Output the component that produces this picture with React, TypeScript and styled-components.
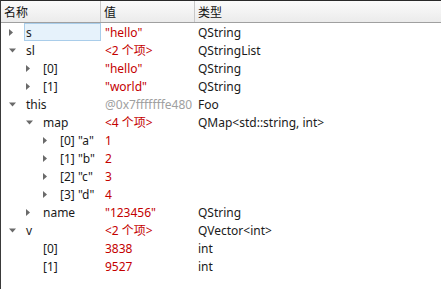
import React from "react";
import styled, { createGlobalStyle } from "styled-components";

const Global = createGlobalStyle`
  html, body { margin: 0; padding: 0; background: #fff; }
  body { font-family: "Noto Sans", "Noto Sans CJK SC", sans-serif; font-size: 12px; }
`;

type Node = {
  name: string;
  value: string;
  type?: string;
  depth: number;
  arrow?: "right" | "down" | "none";
  kind?: "red" | "gray";
  selected?: boolean;
};

const rows: Node[] = [
  { name: "s", value: "\"hello\"", type: "QString", depth: 0, arrow: "right", kind: "red", selected: true },
  { name: "sl", value: "<2 个项>", type: "QStringList", depth: 0, arrow: "down", kind: "red" },
  { name: "[0]", value: "\"hello\"", type: "QString", depth: 1, arrow: "right", kind: "red" },
  { name: "[1]", value: "\"world\"", type: "QString", depth: 1, arrow: "right", kind: "red" },
  { name: "this", value: "@0x7fffffffe480", type: "Foo", depth: 0, arrow: "down", kind: "gray" },
  { name: "map", value: "<4 个项>", type: "QMap<std::string, int>", depth: 1, arrow: "down", kind: "red" },
  { name: "[0] \"a\"", value: "1", depth: 2, arrow: "right", kind: "red" },
  { name: "[1] \"b\"", value: "2", depth: 2, arrow: "right", kind: "red" },
  { name: "[2] \"c\"", value: "3", depth: 2, arrow: "right", kind: "red" },
  { name: "[3] \"d\"", value: "4", depth: 2, arrow: "right", kind: "red" },
  { name: "name", value: "\"123456\"", type: "QString", depth: 1, arrow: "right", kind: "red" },
  { name: "v", value: "<2 个项>", type: "QVector<int>", depth: 0, arrow: "down", kind: "red" },
  { name: "[0]", value: "3838", type: "int", depth: 1, arrow: "none", kind: "red" },
  { name: "[1]", value: "9527", type: "int", depth: 1, arrow: "none", kind: "red" },
];

const Frame = styled.div`
  width: 441px;
  height: 289px;
  box-sizing: border-box;
  border-top: 1px solid #2a2a2a;
  border-left: 1px solid #3a3a3a;
  overflow: hidden;
  background: #fff;
  color: #1a1a1a;
`;

const Header = styled.div`
  display: grid;
  grid-template-columns: 100px 94px 1fr;
  height: 21px;
  background: linear-gradient(#fbfbfb, #ebebeb);
  border-bottom: 1px solid #a0a0a0;
`;

const HeadCell = styled.div<{ $last?: boolean }>`
  display: flex;
  align-items: center;
  padding-left: 3px;
  border-right: ${(p) => (p.$last ? "none" : "1px solid #c8c8c8")};
  font-size: 12px;
  color: #111;
`;

const Body = styled.div`
  display: flex;
  flex-direction: column;
`;

const Row = styled.div`
  display: grid;
  grid-template-columns: 100px 94px 1fr;
  height: 18px;
  align-items: center;
`;

const NameCell = styled.div<{ $depth: number }>`
  display: flex;
  align-items: center;
  height: 18px;
  padding-left: ${(p) => 4 + p.$depth * 17}px;
  box-sizing: border-box;
`;

const ArrowBox = styled.span`
  width: 19px;
  flex: none;
  display: flex;
  align-items: center;
  padding-left: 3px;
  box-sizing: border-box;
`;

const Label = styled.span<{ $selected?: boolean }>`
  flex: 1;
  height: 18px;
  display: flex;
  align-items: center;
  padding-left: 2px;
  white-space: pre;
  box-sizing: border-box;
  ${(p) =>
    p.$selected
      ? `background: #e6f2fb; border: 1px solid #a9cdea; padding-left: 1px;`
      : ``}
`;

const ValueCell = styled.div<{ $kind?: "red" | "gray" }>`
  padding-left: 4px;
  white-space: nowrap;
  color: ${(p) => (p.$kind === "gray" ? "#a0a0a0" : "#c40000")};
`;

const TypeCell = styled.div`
  padding-left: 3px;
  white-space: nowrap;
`;

function Arrow({ dir }: { dir: "right" | "down" | "none" }) {
  if (dir === "none") return null;
  if (dir === "right")
    return (
      <svg width="7" height="9" viewBox="0 0 7 9">
        <path d="M1 1 L5 4.5 L1 8 Z" fill="#6a6a6a" />
      </svg>
    );
  return (
    <svg width="9" height="7" viewBox="0 0 9 7">
      <path d="M1 1.5 L8 1.5 L4.5 5.5 Z" fill="#6a6a6a" />
    </svg>
  );
}

export default function App() {
  return (
    <>
      <Global />
      <Frame>
        <Header>
          <HeadCell>名称</HeadCell>
          <HeadCell>值</HeadCell>
          <HeadCell $last>类型</HeadCell>
        </Header>
        <Body>
          {rows.map((r, i) => (
            <Row key={i}>
              <NameCell $depth={r.depth}>
                <ArrowBox>
                  <Arrow dir={r.arrow ?? "none"} />
                </ArrowBox>
                <Label $selected={r.selected}>{r.name}</Label>
              </NameCell>
              <ValueCell $kind={r.kind}>{r.value}</ValueCell>
              <TypeCell>{r.type ?? ""}</TypeCell>
            </Row>
          ))}
        </Body>
      </Frame>
    </>
  );
}
